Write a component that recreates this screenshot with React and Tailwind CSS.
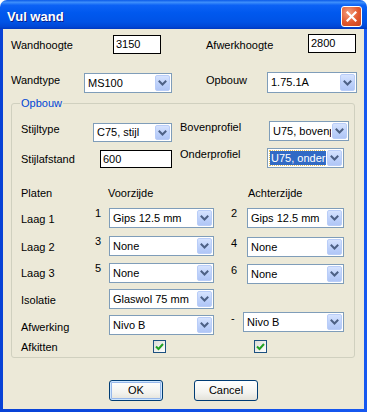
import React from 'react';

function Chevron() {
  return (
    <svg width="9" height="6" viewBox="0 0 9 6" fill="none" stroke="#4D6185" strokeWidth="2" strokeLinecap="square">
      <path d="M1.5 1.5 L4.5 4.5 L7.5 1.5" />
    </svg>
  );
}

function Select({ value, className, selected }) {
  return (
    <div className={`flex shrink-0 border border-[#7F9DB9] bg-white ${className}`}>
      <div className="flex-1 min-w-0 flex items-center overflow-hidden">
        {selected ? (
          <span className="ml-[2px] h-[14px] flex items-center pl-[1px] pr-[2px] whitespace-nowrap bg-[#316AC5] text-white outline outline-1 outline-dotted outline-[#E0C060] leading-[13px] overflow-hidden">
            {value}
          </span>
        ) : (
          <span className="pl-[3px] whitespace-nowrap leading-[13px]">{value}</span>
        )}
      </div>
      <div className="w-[15px] m-[1px] rounded-[2px] border border-[#B9CDF8] bg-[linear-gradient(180deg,#D6E3FE_0%,#BCD0FA_60%,#B0C6F6_100%)] flex items-center justify-center">
        <Chevron />
      </div>
    </div>
  );
}

function TextInput({ value, className }) {
  return (
    <div className={`shrink-0 flex items-center border border-black bg-white pl-[2px] leading-[13px] ${className}`}>
      {value}
    </div>
  );
}

function Checkbox({ className = '' }) {
  return (
    <div className={`shrink-0 w-[13px] h-[13px] border border-[#1C5180] bg-[linear-gradient(135deg,#DCDCD7,#FFFFFF)] flex items-center justify-center ${className}`}>
      <svg width="9" height="9" viewBox="0 0 9 9" fill="none" stroke="#21A121" strokeWidth="2">
        <path d="M1 4.5 L3.5 7 L8 2" />
      </svg>
    </div>
  );
}

function Button({ children, className, isDefault }) {
  return (
    <div className={`shrink-0 rounded-[3px] border border-[#003C74] bg-[linear-gradient(180deg,#FFFFFF_0%,#F3F3EF_60%,#E3E2DA_100%)] flex items-center justify-center leading-[13px] ${isDefault ? 'shadow-[inset_0_0_0_1px_#CEE7FF,inset_0_0_0_2px_#98B8EA]' : ''} ${className}`}>
      {children}
    </div>
  );
}

function LayerRow({ label, lnum, lval, rnum, rval, mt, labelMt, rOff }) {
  return (
    <div className={`flex h-[22px] ${mt}`}>
      <span className={`ml-[9px] w-[73px] leading-[13px] ${labelMt}`}>{label}</span>
      <span className="w-[15px] leading-[13px] pl-[1px]">{lnum}</span>
      <Select value={lval} className="w-[105px] h-[20px] mt-[1px]" />
      <span className={`ml-[17px] w-[16px] leading-[13px] ${rOff}`}>{rnum}</span>
      <Select value={rval} className={`w-[97px] h-[20px] ${rOff === 'mt-[2px]' ? 'mt-[2px]' : 'mt-[1px]'}`} />
    </div>
  );
}

export default function App() {
  return (
    <div className="w-[367px] h-[412px] bg-white font-['Liberation_Sans',Arial,sans-serif] text-[11px] text-black overflow-hidden">
      <div className="w-full h-full flex flex-col rounded-t-[7px] overflow-hidden">
        {/* title bar */}
        <div className="h-[29px] shrink-0 flex items-start justify-between bg-[linear-gradient(180deg,#0A5AE8_0%,#3E8FFB_8%,#0C62F5_18%,#0058EE_45%,#0053E6_75%,#0047D6_92%,#0038C0_100%)]">
          <span className="ml-[7px] mt-[9px] text-[13px] font-bold leading-[15px] text-white [text-shadow:1px_1px_0_#0A1E8A]">
            Vul wand
          </span>
          <div className="mt-[6px] mr-[5px] w-[21px] h-[21px] rounded-[3px] border border-white bg-[radial-gradient(circle_at_35%_30%,#F3A080_0%,#E2582E_55%,#C8431D_100%)] flex items-center justify-center">
            <svg width="11" height="11" viewBox="0 0 11 11" stroke="white" strokeWidth="2.2" strokeLinecap="square">
              <path d="M1.5 1.5 L9.5 9.5 M9.5 1.5 L1.5 9.5" />
            </svg>
          </div>
        </div>

        {/* frame + body */}
        <div className="flex-1 flex flex-col bg-[linear-gradient(90deg,#0842D6_0%,#1658F0_100%)] px-[3px] pb-[3px]">
          <div className="flex-1 flex flex-col bg-[#ECE9D8]">
            <div className="flex h-[21px] mt-[5px]">
              <span className="ml-[8px] w-[102px] mt-[5px] leading-[13px]">Wandhoogte</span>
              <TextInput value="3150" className="w-[48px] h-[19px] mt-[1px]" />
              <span className="ml-[45px] w-[102px] mt-[5px] leading-[13px]">Afwerkhoogte</span>
              <TextInput value="2800" className="w-[48px] h-[19px]" />
            </div>

            <div className="flex h-[21px] mt-[17px]">
              <span className="ml-[8px] w-[73px] mt-[2px] leading-[13px]">Wandtype</span>
              <Select value="MS100" className="w-[88px] h-[20px] mt-[1px]" />
              <span className="ml-[34px] w-[61px] mt-[2px] leading-[13px]">Opbouw</span>
              <Select value="1.75.1A" className="w-[90px] h-[21px]" />
            </div>

            {/* group box */}
            <div className="relative ml-[8px] mt-[10px] w-[344px] h-[255px] shrink-0 border border-[#D0D0BF] rounded-[3px] flex flex-col">
              <span className="absolute left-[8px] top-[-7px] px-[1px] bg-[#ECE9D8] text-[#0046D5] leading-[13px]">
                Opbouw
              </span>

              <div className="flex h-[21px] mt-[17px]">
                <span className="ml-[9px] w-[72px] mt-[2px] leading-[13px]">Stijltype</span>
                <Select value="C75, stijl" className="w-[79px] h-[19px] mt-[2px]" />
                <span className="ml-[8px] w-[89px] leading-[13px]">Bovenprofiel</span>
                <Select value="U75, bovenprofiel" className="w-[80px] h-[20px]" />
              </div>

              <div className="flex h-[20px] mt-[6px]">
                <span className="ml-[9px] w-[79px] mt-[5px] leading-[13px]">Stijlafstand</span>
                <TextInput value="600" className="w-[72px] h-[18px] mt-[2px]" />
                <span className="ml-[8px] w-[87px] leading-[13px]">Onderprofiel</span>
                <Select value="U75, onderprofiel" selected className="w-[77px] h-[20px]" />
              </div>

              <div className="flex h-[13px] mt-[19px] leading-[13px]">
                <span className="ml-[9px] w-[87px]">Platen</span>
                <span className="w-[140px]">Voorzijde</span>
                <span>Achterzijde</span>
              </div>

              <LayerRow label="Laag 1" lnum="1" lval="Gips 12.5 mm" rnum="2" rval="Gips 12.5 mm" mt="mt-[7px]" labelMt="mt-[6px]" rOff="mt-0" />
              <LayerRow label="Laag 2" lnum="3" lval="None" rnum="4" rval="None" mt="mt-[6px]" labelMt="mt-[6px]" rOff="mt-[2px]" />
              <LayerRow label="Laag 3" lnum="5" lval="None" rnum="6" rval="None" mt="mt-[5px]" labelMt="mt-[5px]" rOff="mt-[2px]" />

              <div className="flex h-[20px] mt-[5px]">
                <span className="ml-[9px] w-[88px] mt-[5px] leading-[13px]">Isolatie</span>
                <Select value="Glaswol 75 mm" className="w-[105px] h-[20px]" />
              </div>

              <div className="flex h-[23px] mt-[3px]">
                <span className="ml-[9px] w-[88px] mt-[9px] leading-[13px]">Afwerking</span>
                <Select value="Nivo B" className="w-[105px] h-[20px] mt-[3px]" />
                <span className="ml-[17px] w-[12px] leading-[13px]">-</span>
                <Select value="Nivo B" className="w-[101px] h-[20px]" />
              </div>

              <div className="flex h-[13px] mt-[5px]">
                <span className="ml-[9px] w-[132px] mt-[1px] leading-[13px]">Afkitten</span>
                <Checkbox />
                <Checkbox className="ml-[88px]" />
              </div>
            </div>

            <div className="flex mt-[22px] ml-[106px]">
              <Button isDefault className="w-[54px] h-[21px]">OK</Button>
              <Button className="ml-[31px] w-[64px] h-[21px]">Cancel</Button>
            </div>
          </div>
        </div>
      </div>
    </div>
  );
}
